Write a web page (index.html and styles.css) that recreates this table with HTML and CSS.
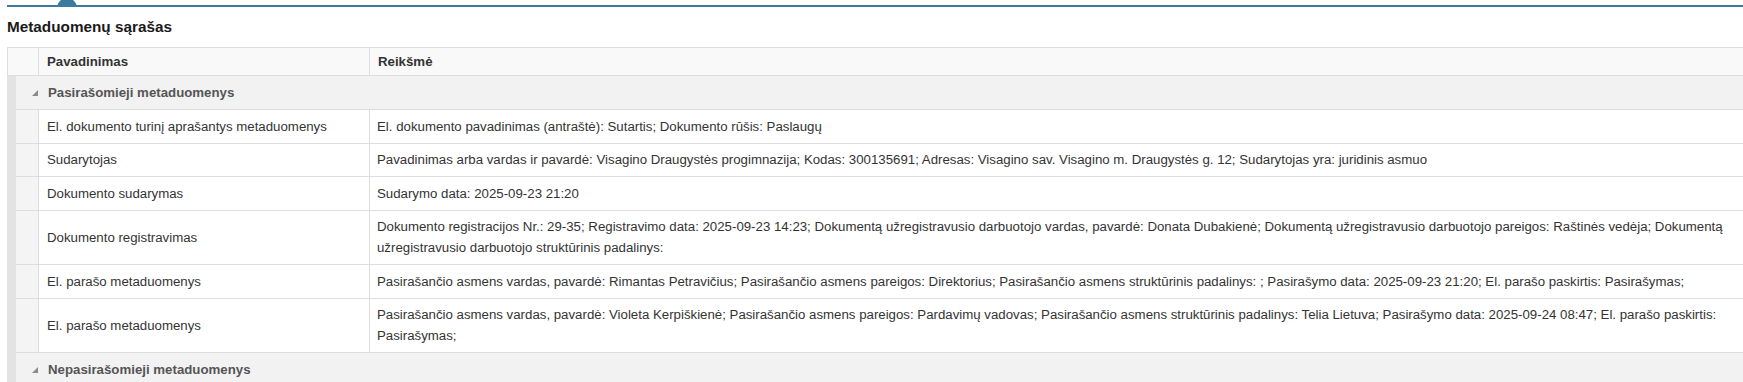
FILE: index.html
```html
<!DOCTYPE html>
<html lang="lt">
<head>
<meta charset="utf-8">
<title>Metaduomenų sąrašas</title>
<link rel="stylesheet" href="styles.css">
</head>
<body>
<div class="page">
  <div class="topbar"><span class="notch"></span></div>
  <h2 class="title">Metaduomenų sąrašas</h2>
  <div class="grid">
    <div class="hdr">
      <div class="hcell"></div>
      <div class="hcell">Pavadinimas</div>
      <div class="hcell">Reikšmė</div>
    </div>

    <div class="group">
      <div class="strip"></div>
      <div class="gcell"><svg class="arrow" width="6" height="6" viewBox="0 0 6 6"><polygon points="6,0 6,6 0,6"/></svg><span>Pasirašomieji metaduomenys</span></div>
    </div>

    <div class="row">
      <div class="strip"></div><div class="indent"></div>
      <div class="name">El. dokumento turinį aprašantys metaduomenys</div>
      <div class="value">El. dokumento pavadinimas (antraštė): Sutartis; Dokumento rūšis: Paslaugų</div>
    </div>
    <div class="row">
      <div class="strip"></div><div class="indent"></div>
      <div class="name">Sudarytojas</div>
      <div class="value">Pavadinimas arba vardas ir pavardė: Visagino Draugystės progimnazija; Kodas: 300135691; Adresas: Visagino sav. Visagino m. Draugystės g. 12; Sudarytojas yra: juridinis asmuo</div>
    </div>
    <div class="row">
      <div class="strip"></div><div class="indent"></div>
      <div class="name">Dokumento sudarymas</div>
      <div class="value">Sudarymo data: 2025-09-23 21:20</div>
    </div>
    <div class="row">
      <div class="strip"></div><div class="indent"></div>
      <div class="name">Dokumento registravimas</div>
      <div class="value">Dokumento registracijos Nr.: 29-35; Registravimo data: 2025-09-23 14:23; Dokumentą užregistravusio darbuotojo vardas, pavardė: Donata Dubakienė; Dokumentą užregistravusio darbuotojo pareigos: Raštinės vedėja; Dokumentą užregistravusio darbuotojo struktūrinis padalinys:</div>
    </div>
    <div class="row">
      <div class="strip"></div><div class="indent"></div>
      <div class="name">El. parašo metaduomenys</div>
      <div class="value">Pasirašančio asmens vardas, pavardė: Rimantas Petravičius; Pasirašančio asmens pareigos: Direktorius; Pasirašančio asmens struktūrinis padalinys: ; Pasirašymo data: 2025-09-23 21:20; El. parašo paskirtis: Pasirašymas;</div>
    </div>
    <div class="row">
      <div class="strip"></div><div class="indent"></div>
      <div class="name">El. parašo metaduomenys</div>
      <div class="value">Pasirašančio asmens vardas, pavardė: Violeta Kerpiškienė; Pasirašančio asmens pareigos: Pardavimų vadovas; Pasirašančio asmens struktūrinis padalinys: Telia Lietuva; Pasirašymo data: 2025-09-24 08:47; El. parašo paskirtis: Pasirašymas;</div>
    </div>

    <div class="group">
      <div class="strip"></div>
      <div class="gcell"><svg class="arrow" width="6" height="6" viewBox="0 0 6 6"><polygon points="6,0 6,6 0,6"/></svg><span>Nepasirašomieji metaduomenys</span></div>
    </div>
  </div>
</div>
</body>
</html>
```

FILE: styles.css
```css
html, body {
  margin: 0;
  padding: 0;
  background: #fff;
}
body {
  font-family: "Liberation Sans", Arial, sans-serif;
  font-size: 13.25px;
  color: #333;
}
.page {
  padding-left: 7px;
}
.topbar {
  position: relative;
  height: 5px;
  border-bottom: 2px solid #3a7c9d;
  overflow: hidden;
}
.notch {
  position: absolute;
  left: 50px;
  top: -2px;
  width: 20px;
  height: 20px;
  border-radius: 50%;
  background: #3a7c9d;
}
.title {
  margin: 11px 0;
  font-size: 15.3px;
  line-height: 18px;
  font-weight: bold;
  color: #1a1a1a;
}
.hdr {
  display: grid;
  grid-template-columns: 30px 331px 1fr;
  border-top: 1px solid #ddd;
  border-left: 1px solid #ddd;
  border-bottom: 1px solid #ddd;
  background: #f9f9f9;
}
.hcell {
  height: 27px;
  line-height: 27px;
  padding: 0 8px;
  font-weight: bold;
  color: #333;
}
.hcell + .hcell {
  border-left: 1px solid #ddd;
}
.group {
  display: grid;
  grid-template-columns: 9px 1fr;
}
.strip {
  background: #e3e3e3;
}
.gcell {
  display: flex;
  align-items: center;
  height: 33px;
  padding-left: 16px;
  background: #f2f2f2;
  border-bottom: 1px solid #ddd;
  font-weight: bold;
  color: #555;
}
.arrow {
  flex: none;
  fill: #8a8a8a;
  margin-right: 10px;
}
.row {
  display: grid;
  grid-template-columns: 9px 22px 331px 1fr;
}
.indent {
  background: #f4f4f4;
  border-bottom: 1px solid #ddd;
}
.name,
.value {
  border-left: 1px solid #ddd;
  border-bottom: 1px solid #ddd;
  padding: 5.75px 8px;
  line-height: 21px;
}
.value {
  padding-left: 7px;
}
.name {
  display: flex;
  align-items: center;
}
```
